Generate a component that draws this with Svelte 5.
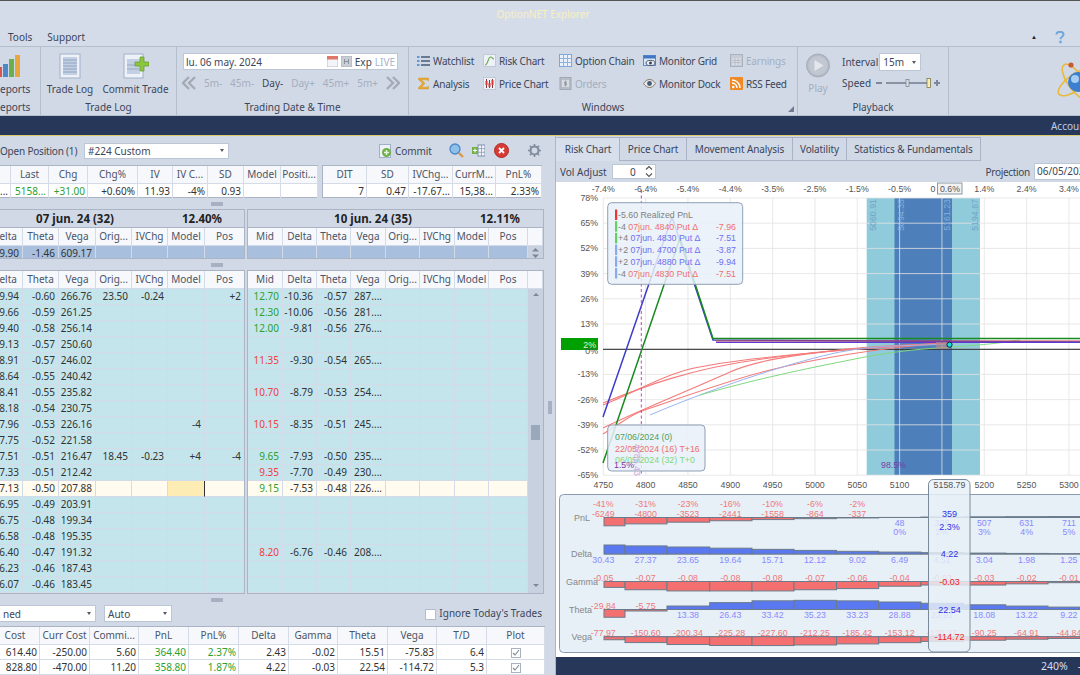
<script>
  const menu = ['Tools', 'Support'];
  const navItems = [['5m-',0],['45m-',0],['Day-',1],['Day+',0],['45m+',0],['5m+',0]];
  const sumA = [['','...',''],['Last','5158...','g'],['Chg','+31.00','g'],['Chg%','+0.60%',''],['IV','11.93',''],['IV C...','-4%',''],['SD','0.93',''],['Model','',''],['Positi...','','']];
  const sumB = [['DIT','7'],['SD','0.47'],['IVChg...','-17.67...'],['CurrM...','15,38...'],['PnL%','2.33%']];
  const headL = ['Delta','Theta','Vega','Orig...','IVChg','Model','Pos'];
  const headR = ['Mid','Delta','Theta','Vega','Orig...','IVChg','Model','Pos',''];
  const L = [
    ['-9.94','-0.60','266.76','23.50','-0.24','','+2'],['-9.66','-0.59','261.25'],['-9.40','-0.58','256.14'],['-9.13','-0.57','250.60'],
    ['-8.91','-0.57','246.02'],['-8.64','-0.55','240.42'],['-8.41','-0.55','235.82'],['-8.18','-0.54','230.75'],
    ['-7.96','-0.53','226.16','','','-4',''],['-7.75','-0.52','221.58'],['-7.51','-0.51','216.47','18.45','-0.23','+4','-4'],['-7.33','-0.51','212.42'],
    ['-7.13','-0.50','207.88'],['-6.95','-0.49','203.91'],['-6.75','-0.48','199.34'],['-6.58','-0.48','195.35'],
    ['-6.40','-0.47','191.32'],['-6.23','-0.46','187.43'],['-6.07','-0.46','183.45'],['-5.89','-0.45','179.64']
  ];
  const R = [
    ['12.70','g','-10.36','-0.57','287....'],['12.30','g','-10.06','-0.56','281....'],['12.00','g','-9.81','-0.56','276....'],[],
    ['11.35','r','-9.30','-0.54','265....'],[],['10.70','r','-8.79','-0.53','254....'],[],
    ['10.15','r','-8.35','-0.51','245....'],[],['9.65','g','-7.93','-0.50','235....'],['9.35','r','-7.70','-0.49','230....'],
    ['9.15','g','-7.53','-0.48','226....'],[],[],[],
    ['8.20','r','-6.76','-0.46','208....'],[],[],[]
  ];
  const YEL = 12;
  const cols7 = [0,1,2,3,4,5,6];
  const cols9 = [0,1,2,3,4,5,6,7,8];
  const posHead = ['Cost','Curr Cost','Commi...','PnL','PnL%','Delta','Gamma','Theta','Vega','T/D','Plot'];
  const posRows = [
    ['614.40','-250.00','5.60','364.40','2.37%','2.43','-0.02','15.51','-75.83','6.4'],
    ['828.80','-470.00','11.20','358.80','1.87%','4.22','-0.03','22.54','-114.72','5.3']
  ];
  const tabs = ['Risk Chart','Price Chart','Movement Analysis','Volatility','Statistics & Fundamentals'];

  const tx = (i) => 603.3 + 42.33 * i;
  const topPct = ['-7.4%','-6.4%','-5.4%','-4.4%','-3.5%','-2.5%','-1.5%','-0.5%',null,null,'1.4%','2.4%','3.4%'];
  const topX = [0,1,2,3,4,5,6,7,null,null,9,10,11];
  const yPct = ['78%','65%','52%','39%','26%','13%','0%','-13%','-26%','-39%','-52%','-65%'];
  const yy = (i) => 198 + 25.2 * i;
  const xTicks = [4750,4800,4850,4900,4950,5000,5050,5100,null,5200,5250,5300];
  const vols = [[876,'5060.91','vol'],[904,'5094.35','vol vd'],[950,'5161.23','vol vd'],[978,'5194.67','vol']];

  const tip = [
    ['-5.60 ', 'Realized PnL', '', '#e33', 'grey'],
    ['-4 ', '07jun. 4840 Put Δ', '-7.96', '#5fd35f', 'red'],
    ['+4 ', '07jun. 4830 Put Δ', '-7.51', '#5fd35f', 'blu'],
    ['+2 ', '07jun. 4700 Put Δ', '-3.87', '#88aaf0', 'blu'],
    ['+2 ', '07jun. 4880 Put Δ', '-9.94', '#88aaf0', 'blu'],
    ['-4 ', '07jun. 4830 Put Δ', '-7.51', '#88aaf0', 'red']
  ];

  const edges = [604,625,667,709.7,752,794,836.5,878.7,921,963.5,1005.7,1048,1080];
  const pnl = [-6249,-4800,-3523,-2441,-1558,-864,-337,48,328,507,631,711];
  const pnlPct = ['-41%','-31%','-23%','-16%','-10%','-6%','-2%','0%','2%','3%','4%','5%'];
  const bars = [
    { name:'PnL', lx:590, ly:521, base:517.5, k:0.00133, v:pnl },
    { name:'Delta', lx:592, ly:557, base:554, k:0.296, v:[30.43,27.37,23.65,19.64,15.71,12.12,9.02,6.49,4.51,3.04,1.98,1.25] },
    { name:'Gamma', lx:598, ly:585, base:581.5, k:118, v:[-0.05,-0.07,-0.08,-0.08,-0.08,-0.07,-0.06,-0.04,-0.03,-0.03,-0.02,-0.01] },
    { name:'Theta', lx:592, ly:613, base:609.5, k:0.26, v:[-29.84,-5.75,13.38,26.43,33.42,35.23,33.23,28.88,23.91,18.08,13.22,9.22] },
    { name:'Vega', lx:592, ly:640, base:636.7, k:0.039, v:[-77.97,-150.60,-200.34,-225.28,-227.60,-212.25,-185.42,-153.12,-120.37,-90.25,-64.91,-44.84] }
  ];
  const fmt = (b, i) => b.v[i].toFixed(2);
</script>

<div class="root">
  <header class="title">OptionNET Explorer</header>
  <nav class="menu">
    {#each menu as m}<span>{m}</span>{/each}
    <span class="grow"></span>
    <span class="collapse">▲</span>
    <svg class="help" width="10" height="13" viewBox="0 0 10 13"><path d="M1.5 3.5C1.5 1.5 3 .8 5 .8s3.5 1 3.5 2.8c0 2.2-3 2.2-3 4.6" fill="none" stroke="#6fa8de" stroke-width="2"/><circle cx="5.5" cy="11" r="1.4" fill="#6fa8de"/></svg>
  </nav>

  <section class="ribbon">
    <div class="group g-rep">
      <div class="body rep">
        <svg width="21" height="26" viewBox="0 0 21 26"><rect x="-3" y="14" width="5" height="10" fill="#d8564e"/><rect x="3" y="11" width="5" height="13" fill="#4f88c8"/><rect x="9" y="6" width="5" height="18" fill="#6ab04c"/><rect x="15" y="2" width="5" height="22" fill="#e8a63c"/></svg>
        <span class="biglabel">eports</span>
      </div>
      <div class="glabel rep-l">eports</div>
    </div>
    <div class="group g-log">
      <div class="body row">
        <div class="big w1">
          <svg width="22" height="26" viewBox="0 0 22 26"><rect x="1" y="1" width="20" height="24" fill="#eef2f8" stroke="#9fb0c8"/><rect x="4" y="4" width="14" height="18" fill="#c3d0e4"/><path d="M4 7h14M4 10h14M4 13h14M4 16h14M4 19h14" stroke="#8ea2c0" stroke-width="1"/></svg>
          <span class="biglabel">Trade Log</span>
        </div>
        <div class="big w2">
          <svg width="26" height="26" viewBox="0 0 26 26"><rect x="1" y="1" width="19" height="24" fill="#eef2f8" stroke="#9fb0c8"/><rect x="4" y="6" width="13" height="15" fill="#c3d0e4"/><path d="M4 12h12M4 16h12" stroke="#9aaac0"/><path d="M17 4h4v5h5v4h-5v5h-4v-5h-5V9h5z" fill="#8cc63f" stroke="#5e9a26" stroke-width=".7"/></svg>
          <span class="biglabel">Commit Trade</span>
        </div>
      </div>
      <div class="glabel">Trade Log</div>
    </div>
    <div class="group g-date">
      <div class="body">
        <div class="dateinput">
          <span class="grow">lu. 06 may. 2024</span>
          <svg width="11" height="11" viewBox="0 0 11 11"><rect width="11" height="11" fill="#f2f4f8" stroke="#b6c0d0"/><rect width="11" height="3.5" fill="#e0766a"/></svg>
          <svg class="ic-h" width="11" height="11" viewBox="0 0 11 11"><rect width="11" height="11" fill="#c9ced6" stroke="#aab2bf"/><path d="M3.5 3v5M7.5 3v5M3.5 5.5h4" stroke="#8c939e"/></svg>
          <span class="exp">Exp</span>
          <span class="live">LIVE</span>
        </div>
        <div class="navrow">
          <svg width="14" height="14" viewBox="0 0 14 14"><path d="M7 1 1 7l6 6M13 1 7 7l6 6" fill="none" stroke="#a4abb6" stroke-width="2.4"/></svg>
          {#each navItems as n}<span class:active={n[1]}>{n[0]}</span>{/each}
          <svg width="14" height="14" viewBox="0 0 14 14"><path d="M1 1l6 6-6 6M7 1l6 6-6 6" fill="none" stroke="#a4abb6" stroke-width="2.4"/></svg>
        </div>
      </div>
      <div class="glabel">Trading Date &amp; Time</div>
    </div>
    <div class="group g-win">
      <div class="body wingrid">
        <div class="wi"><svg width="13" height="12" viewBox="0 0 13 12"><path d="M4 2h9M4 6h9M4 10h9" stroke="#4a5a78" stroke-width="1.4"/><path d="M0 2h2.5M0 6h2.5M0 10h2.5" stroke="#5a9ad8" stroke-width="2"/></svg>Watchlist</div>
        <div class="wi"><svg width="13" height="13" viewBox="0 0 13 13"><rect x=".5" y=".5" width="12" height="12" fill="#eef2f7" stroke="#c0c9d6"/><path d="M2 11C5 11 5 3 7.5 3c2 0 2 2 3.5 2" fill="none" stroke="#6aa84f" stroke-width="1.1"/></svg>Risk Chart</div>
        <div class="wi"><svg width="13" height="13" viewBox="0 0 13 13"><rect x=".5" y=".5" width="12" height="12" fill="#eaf1fa" stroke="#7ea6d8"/><path d="M.5 4.5h12M.5 8.5h12M4.5.5v12M8.5.5v12" stroke="#8eb3e0"/></svg>Option Chain</div>
        <div class="wi"><svg width="13" height="13" viewBox="0 0 13 13"><rect x=".5" y="1.5" width="12" height="10" fill="#d8e6f6" stroke="#5e8cc4"/><rect x=".5" y="1.5" width="12" height="3" fill="#3f78c0"/><ellipse cx="7.5" cy="9" rx="4.5" ry="2.6" fill="#e8eef6" stroke="#47566c"/><circle cx="7.5" cy="9" r="1.5" fill="#3a4658"/></svg>Monitor Grid</div>
        <div class="wi off"><svg width="13" height="13" viewBox="0 0 13 13"><rect x=".5" y=".5" width="12" height="12" fill="#c6ccd6" stroke="#a9b1be"/><rect x="2.5" y="4" width="8" height="7" fill="#dfe3e9"/><path d="M2.5 6.3h8M2.5 8.6h8M5 4v7M8 4v7" stroke="#b3bac6"/></svg>Earnings</div>
        <div class="wi"><svg width="13" height="13" viewBox="0 0 13 13"><path d="M1.500 1h10v3L10 2.800H4.500L8 6.500 4.500 10.200H10L11.500 9v3h-10v-1.500L5.500 6.500 1.500 2.500z" fill="#e9a92e" stroke="#c98a1c" stroke-width=".4"/></svg>Analysis</div>
        <div class="wi"><svg width="13" height="13" viewBox="0 0 13 13"><rect x=".5" y=".5" width="12" height="12" fill="#eef2f7" stroke="#c0c9d6"/><path d="M3.5 2v9M6.5 3v8M9.5 2v9" stroke="#7a3a3a"/><rect x="2.5" y="4" width="2" height="4" fill="#d83a3a"/><rect x="5.5" y="6" width="2" height="4" fill="#d83a3a"/><rect x="8.5" y="3" width="2" height="5" fill="#d83a3a"/></svg>Price Chart</div>
        <div class="wi off"><svg width="13" height="13" viewBox="0 0 13 13"><rect x="1" y=".5" width="11" height="12" fill="#b8bec8" stroke="#a0a8b4"/><rect x="3" y="3" width="7" height="7" fill="#d8dce2"/><path d="M6.5 3.5v6M8 5H5.5v1.5h2V8H5" fill="none" stroke="#8c94a0" stroke-width=".8"/></svg>Orders</div>
        <div class="wi"><svg width="13" height="13" viewBox="0 0 13 13"><path d="M.5 6.5C2.5 3.500 4.500 2.500 6.500 2.500s4 1 6 4c-2 3-4 4-6 4s-4-1-6-4z" fill="#e4e8ee" stroke="#8a7a5e"/><circle cx="6.5" cy="6.5" r="2.4" fill="#4a5a78"/></svg>Monitor Dock</div>
        <div class="wi"><svg width="13" height="13" viewBox="0 0 13 13"><rect width="13" height="13" rx="1" fill="#f08a24"/><circle cx="3.2" cy="10" r="1.3" fill="#fff"/><path d="M2 6a5 5 0 0 1 5 5M2 3a8 8 0 0 1 8 8" fill="none" stroke="#fff" stroke-width="1.4"/></svg>RSS Feed</div>
      </div>
      <div class="glabel">Windows</div>
      <svg class="launch" width="6" height="6" viewBox="0 0 6 6"><path d="M6 0v6H0z" fill="#6f7c90"/></svg>
    </div>
    <div class="group g-play">
      <div class="body row">
        <div class="big w3">
          <svg width="24" height="25" viewBox="0 0 24 25"><circle cx="12" cy="12.5" r="11.5" fill="#b4bbc6" stroke="#a6adb9"/><circle cx="12" cy="12.5" r="9.6" fill="#c2c8d2"/><path d="M8.5 7 17.5 12.5 8.5 18z" fill="#e4e7ec"/></svg>
          <span class="biglabel off">Play</span>
        </div>
        <div class="pctl">
          <div class="prow"><span>Interval</span><div class="select s15"><span class="grow">15m</span><i class="caret"></i></div></div>
          <div class="prow sp"><span>Speed</span>
            <svg width="66" height="12" viewBox="0 0 66 12"><path d="M1 6h6" stroke="#7c8798" stroke-width="2"/><path d="M11 6h41" stroke="#8893a5" stroke-width="2"/><rect x="31" y="2.5" width="3" height="7" fill="#d7dde7" stroke="#76828f" stroke-width=".7"/><rect x="52" y="1.5" width="3.4" height="9" fill="#fbeeb0" stroke="#7e7a4e" stroke-width=".8"/><path d="M59 6h6M62 3v6" stroke="#7c8798" stroke-width="2"/></svg>
          </div>
        </div>
      </div>
      <div class="glabel">Playback</div>
    </div>
    <div class="group g-logo">
      <svg width="44" height="44" viewBox="0 0 44 44"><ellipse cx="20" cy="23" rx="21" ry="8" transform="rotate(55 20 23)" fill="none" stroke="#e8b93c" stroke-width="1.6"/><ellipse cx="20" cy="23" rx="21" ry="8" transform="rotate(-35 20 23)" fill="none" stroke="#e8b93c" stroke-width="1.6"/><circle cx="22" cy="23" r="10" fill="#3a7fd0"/><circle cx="19" cy="20" r="4" fill="#a8cdf2"/><circle cx="15" cy="6" r="2.6" fill="#c85a30"/></svg>
    </div>
  </section>

  <div class="navy"><span>Account</span></div>

  <main class="content">
    <section class="left">
      <div class="ltool">
        <span class="lbl-open">Open Position (1)</span>
        <div class="select s224"><span class="grow">#224 Custom</span><i class="caret"></i></div>
        <div class="commit">
          <svg width="13" height="14" viewBox="0 0 13 14"><rect x=".5" y=".5" width="11" height="13" fill="#eef2f8" stroke="#9fb0c8"/><circle cx="7.5" cy="8.5" r="4.5" fill="#70b048"/><path d="M7.500 6v5M5 8.500h5" stroke="#e8f4dc" stroke-width="1.4"/></svg>
          <span>Commit</span>
        </div>
        <svg class="i-search" width="15" height="15" viewBox="0 0 15 15"><circle cx="6" cy="6" r="5" fill="#8fc0ea" stroke="#4c88c8" stroke-width="1.3"/><path d="M9.800 9.800 14 14" stroke="#d69a50" stroke-width="2.4"/></svg>
        <svg class="i-cols" width="13" height="13" viewBox="0 0 13 13"><rect x="6" y="1" width="7" height="11" fill="#f0f3f8" stroke="#7e92b0"/><path d="M6 4.600h7M6 8.300h7M9.500 1v11" stroke="#7e92b0" stroke-width=".7"/><rect x="0" y="3" width="6" height="7" fill="#72b04a"/><path d="M3 4.500v4M1 6.500h4" stroke="#fff"/></svg>
        <svg class="i-x" width="15" height="15" viewBox="0 0 15 15"><circle cx="7.5" cy="7.5" r="7" fill="#d83a36" stroke="#b02a26"/><path d="M5 5l5 5M10 5l-5 5" stroke="#fff" stroke-width="1.8"/></svg>
        <svg class="i-gear" width="13" height="13" viewBox="0 0 13 13"><circle cx="6.5" cy="6.5" r="4" fill="none" stroke="#828d9e" stroke-width="2.2"/><path d="M6.500 0v2.500M6.500 10.500V13M0 6.500h2.500M10.500 6.500H13M1.900 1.900l1.800 1.800M9.300 9.300l1.800 1.800M11.100 1.900 9.300 3.700M3.700 9.300l-1.800 1.800" stroke="#828d9e" stroke-width="1.6"/></svg>
      </div>

      <div class="sumrow">
        <div class="box sum-a">
          {#each sumA as c}<div class="h">{c[0]}</div>{/each}
          {#each sumA as c}<div class="v {c[2]}">{c[1]}</div>{/each}
        </div>
        <div class="box sum-b">
          {#each sumB as c}<div class="h">{c[0]}</div>{/each}
          {#each sumB as c}<div class="v">{c[1]}</div>{/each}
        </div>
      </div>

      <div class="split"><i class="grip"></i></div>

      <div class="chains top">
        <div class="box chain cl">
          <div class="gh"><b class="g1">07 jun. 24 (32)</b><b class="g2">12.40%</b></div>
          <div class="crow tl hrow">{#each headL as h}<div class="h">{h}</div>{/each}</div>
          <div class="crow tl blue"><div>-9.90</div><div>-1.46</div><div>609.17</div><div></div><div></div><div></div><div></div></div>
        </div>
        <div class="box chain cr">
          <div class="gh"><b class="g3">10 jun. 24 (35)</b><b class="g4">12.11%</b></div>
          <div class="crow tr hrow">{#each headR as h}<div class="h">{h}</div>{/each}</div>
          <div class="crow tr blue">{#each cols9 as i}<div class:sb={i===8}>{#if i===8}<svg width="9" height="12" viewBox="0 0 9 12"><path d="M1 4.500 4.500 1 8 4.500zM1 7.500h7L4.500 11z" fill="#7c8898"/></svg>{/if}</div>{/each}</div>
        </div>
      </div>

      <div class="split"><i class="grip"></i></div>

      <div class="chains main">
        <div class="box chain cl">
          <div class="crow tl hrow">{#each headL as h}<div class="h">{h}</div>{/each}</div>
          <div class="rows">
            {#each L as r, ri}
              <div class="crow tl" class:yel={ri===YEL}>
                {#each cols7 as i}<div class:ycell={ri===YEL && i===5}>{r[i] ?? ''}</div>{/each}
              </div>
            {/each}
          </div>
        </div>
        <div class="box chain cr">
          <div class="crow tr hrow">{#each headR as h}<div class="h">{h}</div>{/each}</div>
          <div class="bodyr">
            <div class="rows rr">
              {#each R as r, ri}
                <div class="crow tr8" class:yel={ri===YEL}>
                  <div class={r[1] ?? ''}>{r[0] ?? ''}</div><div>{r[2] ?? ''}</div><div>{r[3] ?? ''}</div><div>{r[4] ?? ''}</div><div></div><div></div><div></div><div></div>
                </div>
              {/each}
            </div>
            <div class="scroll">
              <i class="arr up"></i>
              <i class="thumb"></i>
              <i class="arr dn"></i>
            </div>
          </div>
        </div>
      </div>

      <div class="split"><i class="grip"></i></div>

      <div class="ctrl">
        <div class="select s-comb"><span class="grow">ned</span><i class="caret"></i></div>
        <div class="select s-auto"><span class="grow">Auto</span><i class="caret"></i></div>
        <span class="grow"></span>
        <i class="chk"></i>
        <span class="ign">Ignore Today's Trades</span>
      </div>

      <div class="box pos">
        {#each posHead as h}<div class="h">{h}</div>{/each}
        {#each posRows as r}
          {#each r as c, i}<div class="v" class:g={i===3||i===4}>{c}</div>{/each}
          <div class="v ctr"><svg width="10" height="10" viewBox="0 0 10 10"><rect x=".5" y=".5" width="9" height="9" fill="#fff" stroke="#a8b2c0"/><path d="M2 5l2 2 4-5" fill="none" stroke="#7f8896" stroke-width="1.1"/></svg></div>
        {/each}
      </div>
      <div class="vgrip"><i></i></div>
    </section>

    <section class="right">
      <div class="tabs">
        {#each tabs as t, i}<div class="tab tab{i}" class:on={i===0}>{t}</div>{/each}
      </div>
      <div class="rtool">
        <span>Vol Adjust</span>
        <div class="spin"><span class="grow">0</span><svg width="8" height="13" viewBox="0 0 8 13"><path d="M1 4.500 4 1.500 7 4.500M1 8.500l3 3 3-3" fill="none" stroke="#555" stroke-width="1.1"/></svg></div>
        <span class="grow"></span>
        <span class="tight">Projection</span>
        <div class="proj">06/05/2024</div>
      </div>

      <svg class="chart" width="524" height="473" viewBox="556 182 524 473">
        <rect x="556" y="182" width="524" height="473" fill="#fff"/>
        <rect x="866.700" y="198" width="113.300" height="277" fill="#90cbdb"/>
        <rect x="894.500" y="198" width="57.500" height="277" fill="#4d7fba"/>
        {#each yPct as p, i}<line x1="603" x2="1080" y1={yy(i)} y2={yy(i)} class="gl"/>{/each}
        {#each xTicks as t, i}<line x1={tx(i)} x2={tx(i)} y1="198" y2="475" class="gl"/>{/each}
        {#each vols as v}
          <text class={v[2]} transform="rotate(-90 {v[0]} 199)" x={v[0]} y="199" text-anchor="end">{v[1]}</text>
        {/each}
        <line x1="603" x2="1080" y1="349.300" y2="349.300" stroke="#222" stroke-width="1"/>

        <g fill="none" stroke="#f57a7a" stroke-width="1.100">
          <path d="M603 403C640 388 690 368 770 358S880 345 950 343.500"/>
          <path d="M603 405C630 395 660 376 690 369S800 352 950 343"/>
          <path d="M603 428C640 410 690 390 730 372S850 348 950 343"/>
          <path d="M603 434C620 424 632 414 642 411C680 398 730 380 770 370S880 347 950 343"/>
        </g>
        <path d="M650 415C720 385 800 360 840 352S920 346 950 344" fill="none" stroke="#9bb4f0"/>
        <path d="M700 395C760 378 810 368 840 362S890 351 950 347S1000 342 1020 340" fill="none" stroke="#80d880"/>
        <path d="M603 417 672 217 713 340 1080 342" fill="none" stroke="#3c3cc8" stroke-width="1.500" stroke-linejoin="round"/>
        <path d="M603 463 680 238 713 338.500 1080 338.500" fill="none" stroke="#188a20" stroke-width="1.500"/>
        <line x1="716" x2="1080" y1="341" y2="341" stroke="#d04848"/>
        <line x1="716" x2="1080" y1="342.300" y2="342.300" stroke="#5a3ad0" stroke-width="1.200"/>
        <line x1="641.300" x2="641.300" y1="190" y2="475" stroke="#c040c8" stroke-dasharray="3 2.500"/>

        <rect x="936" y="342" width="13" height="7" fill="#b08a90" opacity=".7"/>
        <circle cx="949.500" cy="344.700" r="2.600" fill="#12e0e0" stroke="#123" stroke-width="1"/>
        <rect x="561" y="338" width="37" height="12" fill="#00a000"/>
        <text x="596" y="347.500" class="ax" text-anchor="end" style="fill:#e8f0d0">2%</text>

        {#each topPct as p, i}
          {#if p}<text x={tx(topX[i])} y="192" text-anchor="middle" class="ax">{p}</text>{/if}
        {/each}
        <text x="933" y="192" text-anchor="middle" class="ax">0</text>
        <rect x="937.500" y="183" width="24.500" height="11" fill="#f2f2f2" stroke="#8a9aa8"/>
        <text x="950" y="192" text-anchor="middle" class="ax">0.6%</text>
        {#each yPct as p, i}<text x="598" y={i===6 ? yy(i)+5 : yy(i)+3} text-anchor="end" class="ax">{p}</text>{/each}
        {#each xTicks as t, i}
          {#if t}<text x={tx(i)} y="488" text-anchor="middle" class="ax">{t}</text>{/if}
        {/each}

        <rect x="607.700" y="202.700" width="135" height="81.600" rx="4" fill="#e8f0f8" fill-opacity=".85" stroke="#8fa0b5"/>
        {#each tip as t, i}
          <rect x="615" y={209.500 + 11.700*i} width="2.200" height="10.500" fill={t[3]}/>
          <text x="618" y={218 + 11.700*i} class="tt {t[4]}"><tspan class="grey">{t[0]}</tspan>{t[1]}</text>
          <text x="736" y={218 + 11.700*i} class="tt {t[4]}" text-anchor="end">{t[2]}</text>
        {/each}

        <rect x="607.700" y="425" width="97.300" height="46" rx="4" fill="#e8f0f8" fill-opacity=".85" stroke="#8fa0b5"/>
        <text x="615" y="440" class="tt dg">07/06/2024 (0)</text>
        <text x="615" y="451.600" class="tt red">22/05/2024 (16) T+16</text>
        <text x="615" y="463.200" class="tt lg">06/05/2024 (32) T+0</text>
        <text transform="rotate(90 634 444)" x="634" y="444" class="tt pf">4785.43</text>
        <text x="614" y="468" class="tt pu">1.5%</text>
        <text x="881" y="468" class="tt pu">98.5%</text>

        <rect x="559.500" y="494.500" width="530" height="158" rx="4" fill="#e7eff7" stroke="#8a9bb0"/>
        {#each bars as b}
          <text x={b.lx} y={b.ly} class="ax ll" text-anchor="end">{b.name}</text>
          <line x1="604" x2="1080" y1={b.base} y2={b.base} stroke="#7a8a96"/>
          {#each b.v as v, i}
            {@const h = Math.abs(v) * b.k}
            <rect x={edges[i]} y={v > 0 ? b.base - h : b.base} width={edges[i+1]-edges[i]} height={h} fill={v > 0 ? '#5a78f0' : '#f47070'} stroke="#6b7b8a" stroke-width="1"/>
            {#if b.name === 'PnL'}
              {#if v < 0}
                <text x={tx(i)} y="507" class="ax rd" text-anchor="middle">{pnlPct[i]}</text>
                <text x={tx(i)} y="517" class="ax rd" text-anchor="middle">{v}</text>
              {:else}
                <text x={tx(i)} y="526" class="ax bl" text-anchor="middle">{v}</text>
                <text x={tx(i)} y="534.500" class="ax bl" text-anchor="middle">{pnlPct[i]}</text>
              {/if}
            {:else if v > 0}
              <text x={tx(i)} y={b.base + 8.500} class="ax bl" text-anchor="middle">{fmt(b,i)}</text>
            {:else}
              <text x={tx(i)} y={b.base - 0.500} class="ax rd" text-anchor="middle">{fmt(b,i)}</text>
            {/if}
          {/each}
        {/each}

        <rect x="928.500" y="479.500" width="41.500" height="172.500" rx="5" fill="#e7eff7" fill-opacity=".84" stroke="#7a8a9a"/>
        <text x="949.500" y="488" class="ax" text-anchor="middle">5158.79</text>
        <text x="949.500" y="517" class="ax strong-b" text-anchor="middle">359</text>
        <text x="949.500" y="530" class="ax strong-b" text-anchor="middle">2.3%</text>
        <text x="949.500" y="557" class="ax strong-b" text-anchor="middle">4.22</text>
        <text x="949.500" y="585" class="ax strong-r" text-anchor="middle">-0.03</text>
        <text x="949.500" y="613" class="ax strong-b" text-anchor="middle">22.54</text>
        <text x="949.500" y="640" class="ax strong-r" text-anchor="middle">-114.72</text>
      </svg>

      <div class="rbar"><span>240%</span><span class="dash">–</span></div>
    </section>
  </main>
</div>

<style>
  :global(body) { margin: 0; }
  .root {
    width: 1080px; height: 675px; overflow: hidden; background: #d1d9e7;
    font-family: "Noto Sans", "Open Sans", sans-serif; font-size: 10px; color: #3b4658;
    display: flex; flex-direction: column;
  }
  .grow { flex: 1; }
  .title { height: 27px; flex: none; border-top: 1px solid #555; text-align: center; line-height: 27px; color: #f8f0c0; padding-left: 6px; background: #d5dce9; }
  .menu { height: 18px; flex: none; display: flex; align-items: center; gap: 15px; padding: 0 15px 0 8px; background: #d5dce9; }
  .collapse { font-size: 6px; color: #222; }
  .help { margin-left: 3px; }
  .ribbon { height: 70px; flex: none; display: flex; border-top: 1px solid #b4bfce; border-bottom: 1px solid #b4bfce; box-sizing: border-box; background: #d1d9e7; }
  .group { display: flex; flex: none; flex-direction: column; border-right: 1px solid #b4bfce; box-sizing: border-box; position: relative; }
  .body { flex: 1; }
  .row { display: flex; }
  .glabel { height: 15px; line-height: 15px; text-align: center; }
  .g-rep { width: 41px; }
  .rep { display: flex; flex-direction: column; padding-top: 6px; }
  .rep .biglabel { text-align: right; padding-right: 15px; margin-top: 3px; }
  .rep-l { text-align: right; padding-right: 15px; }
  .g-log { width: 136px; }
  .big { display: flex; flex-direction: column; align-items: center; padding-top: 6px; }
  .biglabel { margin-top: 3px; line-height: 14px; white-space: nowrap; }
  .w1 { width: 58px; }
  .w2 { width: 73px; }
  .w3 { width: 24px; margin-left: 8px; }
  .off { color: #a4aebd; }
  .g-date { width: 232px; }
  .dateinput { margin: 6px 0 0 6px; width: 215px; height: 17px; box-sizing: border-box; background: #fff; border: 1px solid #bcc7d6; display: flex; align-items: center; padding: 0 1px 0 2px; }
  .ic-h { margin-left: 3px; }
  .exp { margin-left: 3px; }
  .live { margin-left: 3px; color: #a8b4c8; padding-right: 1px; }
  .navrow { margin: 5px 0 0 5px; width: 218px; display: flex; align-items: center; justify-content: space-between; color: #a4aebd; height: 16px; }
  .navrow .active { color: #3b4658; }
  .g-win { width: 389px; }
  .wingrid { display: grid; grid-template-columns: 66px 76px 84px 87px 1fr; grid-auto-rows: 23px; padding: 2px 0 0 8px; }
  .wi { display: flex; align-items: center; gap: 3px; white-space: nowrap; letter-spacing: -.2px; }
  .launch { position: absolute; right: 3px; bottom: 3px; }
  .g-play { width: 151px; }
  .pctl { margin-left: 12px; padding-top: 6px; }
  .prow { display: flex; align-items: center; height: 18px; gap: 1px; }
  .sp { margin-top: 3px; gap: 4px; }
  .select { background: #fff; border: 1px solid #bcc7d6; display: flex; align-items: center; box-sizing: border-box; padding: 0 4px 0 3px; height: 17px; flex: none; }
  .caret { width: 0; height: 0; border: 2.5px solid transparent; border-top: 3px solid #556; border-bottom: 0; }
  .s15 { width: 42px; height: 18px; padding-left: 3px; }
  .g-logo { flex: 1; border: 0; padding: 12px 0 0 107px; }
  .navy { height: 19px; flex: none; background: #27375a; border-bottom: 1px solid #d8c96c; display: flex; align-items: center; justify-content: flex-end; color: #bfcde5; }
  .navy span { margin-right: -9px; }
  .content { flex: 1; display: flex; min-height: 0; }
  .left { width: 555px; flex: none; overflow: hidden; display: flex; flex-direction: column; position: relative; }
  .ltool { height: 29px; flex: none; display: flex; align-items: center; }
  .lbl-open { width: 84px; flex: none; white-space: nowrap; letter-spacing: -.2px; }
  .s224 { width: 145px; height: 16px; }
  .commit { display: flex; align-items: center; gap: 3px; margin-left: 150px; letter-spacing: -.1px; }
  .i-search { margin-left: 17px; } .i-cols { margin-left: 8px; } .i-x { margin-left: 9px; } .i-gear { margin-left: 19px; }
  .box { border: 1px solid #aab4c4; box-sizing: border-box; background: #fff; }
  .h { background: #f6f8fb; border-right: 1px solid #d5dce8; border-bottom: 1px solid #d5dce8; text-align: center; line-height: 17px; white-space: nowrap; overflow: hidden; box-sizing: border-box; color: #4a5568; }
  .v { border-right: 1px solid #d5dce8; text-align: right; padding-right: 2px; line-height: 15px; white-space: nowrap; overflow: hidden; box-sizing: border-box; color: #333; }
  .g { color: #2ea02e !important; }
  .r { color: #f04040 !important; }
  .ctr { text-align: center; padding: 2px 0 0; }
  .sumrow { display: flex; height: 33px; flex: none; }
  .sum-a { width: 328px; flex: none; margin-left: -10px; display: grid; grid-template-columns: 20px 38px 39px 50px 35px 35px 36px 37px 37px; grid-template-rows: 18px 15px; }
  .sum-b { width: 220px; flex: none; margin-left: 4px; display: grid; grid-template-columns: 44px 42px 44px 43px 46px; grid-template-rows: 18px 15px; }
  .split { height: 11px; flex: none; display: flex; align-items: center; padding-left: 211px; }
  .grip { width: 12px; height: 4px; background-image: radial-gradient(#a3aebf .7px, transparent .8px); background-size: 2px 2px; }
  .chains { display: flex; flex: none; gap: 2px; }
  .chains.top { height: 50px; }
  .chains.main { height: 324px; }
  .chain { overflow: hidden; background: #d1d9e7; flex: none; }
  .cl { width: 259px; margin-left: -14px; }
  .cr { width: 297px; }
  .gh { height: 17px; line-height: 17px; display: flex; background: #d1d9e7; color: #222; font-size: 11.5px; text-align: center; border-bottom: 1px solid #aab4c4; }
  .g1 { width: 176px; } .g2 { width: 78px; }
  .g3 { width: 210px; margin-left: 20px; } .g4 { width: 44px; }
  .crow { display: grid; height: 16px; background: #c5e5ed; }
  .crow > div { border-right: 1px solid #d3dae8; border-bottom: 1px solid #d3dae8; box-sizing: border-box; text-align: right; padding-right: 3px; line-height: 15px; color: #333; white-space: nowrap; overflow: hidden; }
  .crow > .h { text-align: center; padding: 0; line-height: 17px; color: #4a5568; }
  .hrow { height: 18px; }
  .tl { grid-template-columns: 36px 36px 37px 36px 36px 37px 40px; }
  .tr { grid-template-columns: 35px 34px 34px 35px 34px 35px 34px 39px 15px; }
  .tr8 { grid-template-columns: 35px 34px 34px 35px 34px 35px 34px 39px; }
  .crow.blue { height: 14px; background: #a8c0dd; }
  .crow.blue > div { border-bottom: 0; line-height: 14px; }
  .crow > .sb { background: #c8d1e0; padding: 1px 0 0 3px; border: 0; }
  .crow > .sb svg { display: block; }
  .rows { height: 304px; overflow: hidden; }
  .crow.yel { background: #fffbef; }
  .crow > .ycell { background: #fdedb5; border-right: 1.5px solid #333; }
  .bodyr { display: flex; height: 304px; }
  .rr { width: 280px; flex: none; }
  .scroll { width: 15px; height: 304px; background: #c8d1e0; display: flex; flex-direction: column; align-items: center; position: relative; }
  .arr { width: 0; height: 0; border: 3px solid transparent; position: absolute; }
  .up { border-bottom: 3px solid #7c8898; border-top: 0; top: 4px; }
  .dn { border-top: 3px solid #7c8898; border-bottom: 0; bottom: 6px; }
  .thumb { position: absolute; top: 136px; width: 9px; height: 15px; background: #9aa8bc; }
  .ctrl { height: 21px; flex: none; display: flex; align-items: flex-start; padding-right: 13px; }
  .s-comb { width: 110px; margin-left: -14px; padding-left: 16px; }
  .s-auto { width: 68px; margin-left: 8px; }
  .chk { width: 9px; height: 9px; background: #fff; border: 1px solid #b3bdcc; margin: 4px 3px 0 0; }
  .ign { line-height: 17px; }
  .pos { margin-left: -10px; width: 555px; flex: none; display: grid; grid-template-columns: 49px 50px 49px 50px 50px 50px 49px 50px 49px 50px 58px; grid-template-rows: 18px 15px 15px; height: 49px; }
  .pos .v { border-bottom: 1px solid #d5dce8; }
  .vgrip { position: absolute; right: 3px; top: 265px; width: 4px; height: 13px; background-image: radial-gradient(#a3aebf .7px, transparent .8px); background-size: 2px 2px; }
  .right { flex: 1; display: flex; flex-direction: column; border-left: 1px solid #a9b7ca; min-width: 0; background: #fff; }
  .tabs { height: 25px; flex: none; display: flex; background: #d1d9e7; padding-top: 1px; box-sizing: border-box; }
  .tab { box-sizing: border-box; height: 24px; flex: none; border: 1px solid #a8b4c6; border-left: 0; text-align: center; line-height: 22px; white-space: nowrap; letter-spacing: -.1px; }
  .tab.on { background: #d7dfec; border-left: 1px solid #d7dfec; border-bottom: 0; }
  .tab0 { width: 64px; } .tab1 { width: 67px; } .tab2 { width: 106px; } .tab3 { width: 54px; } .tab4 { width: 134px; }
  .rtool { height: 21px; flex: none; display: flex; align-items: center; background: #d1d9e7; padding-left: 4px; gap: 4px; }
  .tight { letter-spacing: -.3px; }
  .spin { width: 44px; height: 15px; background: #fff; border: 1px solid #bcc7d6; box-sizing: border-box; display: flex; align-items: center; text-align: right; padding-right: 2px; margin-left: 1px; }
  .spin .grow { padding-right: 9px; }
  .proj { width: 50px; height: 15px; background: #fff; border: 1px solid #bcc7d6; flex: none; margin-right: -8px; padding-left: 2px; line-height: 15px; white-space: nowrap; }
  .chart { display: block; flex: none; font-family: "Liberation Sans", Arial, sans-serif; }
  .gl { stroke: rgba(226,226,226,.8); stroke-width: 1; }
  .ax { font-size: 8.8px; fill: #555; }
  .ll { fill: #888; font-size: 9px; }
  .rd { fill: #f07878; }
  .bl { fill: #8a8aff; }
  .strong-b { fill: #3030e8; font-size: 9px; }
  .strong-r { fill: #f02020; font-size: 9px; }
  .vol { font-size: 8.8px; fill: #6da6c8; }
  .vd { fill: #86b0dc; }
  .tt { font-size: 8.8px; }
  .grey { fill: #808080; }
  .red { fill: #f07070; }
  .blu { fill: #7070f0; }
  .dg { fill: #4f9f5f; }
  .lg { fill: #80d880; }
  .pu { fill: #7a3aa8; }
  .pf { fill: #d0a8e0; }
  .rbar { flex: 1; background: #27375a; border-top: 2px solid #fff; color: #d8deea; display: flex; justify-content: flex-end; align-items: center; gap: 10px; font-size: 10.5px; box-sizing: border-box; }
  .dash { margin-right: -3px; }
</style>
